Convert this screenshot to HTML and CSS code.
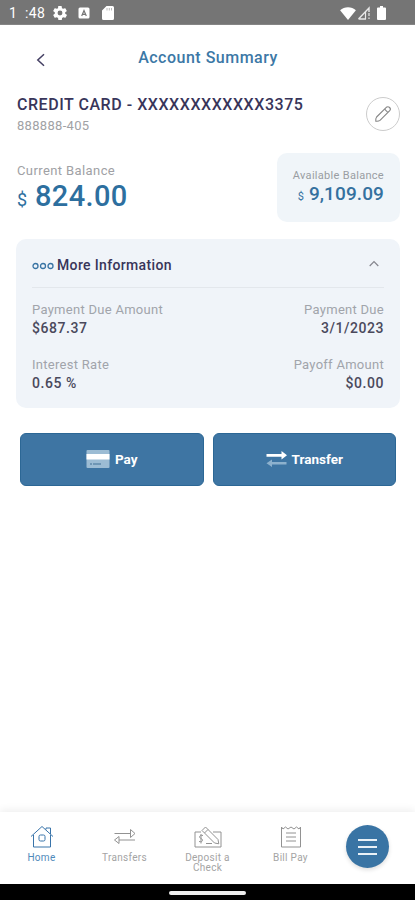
FILE: index.html
```html
<!DOCTYPE html>
<html lang="en">
<head>
<meta charset="utf-8">
<meta name="viewport" content="width=device-width, initial-scale=1">
<title>Account Summary</title>
<link rel="stylesheet" href="styles.css">
</head>
<body>
<div class="statusbar">
  <span class="hour">1</span><span class="minute">:48</span>
  <svg class="gear" width="14" height="14" viewBox="2 2 20 20"><path fill="#fff" d="M19.4 13a7.500 7.500 0 0 0 0-2l2.100-1.600a.5.5 0 0 0 .1-.6l-2-3.500a.5.5 0 0 0-.6-.2l-2.500 1a7.300 7.300 0 0 0-1.700-1l-.4-2.600a.5.5 0 0 0-.5-.4h-4a.5.5 0 0 0-.5.4L9.200 5.100a7.700 7.700 0 0 0-1.700 1L5 5.100a.5.5 0 0 0-.6.2l-2 3.500a.5.5 0 0 0 .1.600L4.600 11a8 8 0 0 0 0 2l-2.100 1.600a.5.5 0 0 0-.1.600l2 3.500c.1.200.4.300.6.200l2.500-1a7.300 7.300 0 0 0 1.700 1l.4 2.600c0 .2.200.4.5.4h4c.2 0 .5-.2.500-.4l.4-2.600a7.700 7.700 0 0 0 1.700-1l2.500 1c.2.100.5 0 .6-.2l2-3.500a.5.5 0 0 0-.1-.6zM12 15.500a3.500 3.500 0 1 1 0-7 3.500 3.500 0 0 1 0 7z"/></svg>
  <svg class="app" width="12" height="12" viewBox="0 0 12 12"><rect x=".5" y=".5" width="11" height="11" rx="1.500" fill="#fff"/><path d="M3.700 9 6 3.500 8.300 9M4.600 7.300h2.900" fill="none" stroke="#757575" stroke-width="1.200"/></svg>
  <svg class="sd" width="12" height="14" viewBox="0 0 12 14"><path fill="#fff" d="M4.500 0h6A1.500 1.500 0 0 1 12 1.500v11a1.500 1.500 0 0 1-1.500 1.500h-9A1.500 1.500 0 0 1 0 12.500v-8z"/><path d="M5 2v2.500M7.300 2v2.500M9.500 2v2.500" stroke="#bbb" stroke-width="1"/></svg>
  <svg class="wifi" width="16" height="13" viewBox="0 0 17 14"><path fill="#fff" d="M0 3.500C4.500-.7 12.500-.7 17 3.500L8.500 14z"/></svg>
  <svg class="signal" width="14" height="14" viewBox="0 0 14 14"><path d="M1.500 13 12 2v4M1.500 13H9" fill="none" stroke="#e8e8e8" stroke-width="1.400"/><path d="M8.500 6v7M12 7v3M12 11.500V13" stroke="#e8e8e8" stroke-width="1.200"/></svg>
  <svg class="battery" width="9" height="14" viewBox="0 0 9 14"><path fill="#fff" d="M3 0h3v1.500h2a1 1 0 0 1 1 1V13a1 1 0 0 1-1 1H1a1 1 0 0 1-1-1V2.500a1 1 0 0 1 1-1h2z"/></svg>
</div>
<header class="header">
  <svg class="back" width="10" height="14" viewBox="0 0 10 14"><path d="M8 1.200 1.800 7 8 12.800" fill="none" stroke="#443f63" stroke-width="1.500"/></svg>
  <h1 class="title">Account Summary</h1>
</header>
<main class="main">
  <section class="account">
    <div>
      <div class="name">CREDIT CARD - XXXXXXXXXXXX3375</div>
      <div class="number">888888-405</div>
    </div>
    <button class="edit" aria-label="Edit"><svg width="18" height="18" viewBox="0 0 18 18" fill="none" stroke="#868686" stroke-width="1.100"><path d="M2.600 12 12.300 2.300Q14 1 15.600 2.500T15.700 5.700L6 15.400Q4.500 16.500 1.800 16.200 1.500 13.500 2.600 12Z"/><path d="m10.600 4.200 3.200 3.200"/></svg></button>
  </section>
  <section class="balances">
    <div class="current">
      <div class="label">Current Balance</div>
      <div class="big"><span class="currency">$</span><span class="amount">824.00</span></div>
    </div>
    <div class="available">
      <div class="small-label">Available Balance</div>
      <div class="mid"><span class="currency">$</span><span class="amount">9,109.09</span></div>
    </div>
  </section>
  <section class="card">
    <div class="card-head">
      <svg width="22" height="8" viewBox="0 0 22 8" fill="none" stroke="#3974a4" stroke-width="1.300"><circle cx="3.500" cy="4" r="2.500"/><circle cx="11" cy="4" r="2.500"/><circle cx="18.500" cy="4" r="2.500"/></svg>
      <h2 class="more">More Information</h2>
      <svg class="chevron" width="10" height="7" viewBox="0 0 10 7"><path d="M.7 6 5 1.500 9.300 6" fill="none" stroke="#85858d" stroke-width="1.200"/></svg>
    </div>
    <dl class="facts">
      <div class="fact"><dt>Payment Due Amount</dt><dd>$687.37</dd></div>
      <div class="fact right"><dt>Payment Due</dt><dd>3/1/2023</dd></div>
      <div class="fact"><dt>Interest Rate</dt><dd>0.65 %</dd></div>
      <div class="fact right"><dt>Payoff Amount</dt><dd>$0.00</dd></div>
    </dl>
  </section>
  <section class="actions">
    <button class="action"><svg width="24" height="18" viewBox="0 0 24 18"><rect x=".5" width="23" height="18" rx="1" fill="#9cbcd4"/><path d="M.5 4h23v5.500H.5z" fill="#fff"/><path d="M4 14h2m1 0h8" stroke="#6e96b5" stroke-width="2"/></svg><span>Pay</span></button>
    <button class="action"><svg width="21" height="16" viewBox="0 0 21 16"><path d="M.5 3h15V0l5.500 4.300-5.500 4.200V5.800H.5z" fill="#fff"/><path d="M20.500 11H6V8.500L.5 12.300 6 16v-2.600h14.500z" fill="#8db1cd"/></svg><span>Transfer</span></button>
  </section>
</main>
<nav class="nav">
  <a class="tab active"><svg width="24" height="24" viewBox="0 0 24 24"><path d="M1 11.500 12 1.500l11 10M3.500 10v12h17V10M16 4.500V3h4.500v6"/><rect x="9" y="10" width="6" height="6" rx="1.500"/></svg><span>Home</span></a>
  <a class="tab"><svg width="24" height="24" viewBox="0 0 24 24"><path d="M1.500 8.500h16M17.500 4.500v8l4.500-4zM22 15H6M6 11.500v7L1.500 15z"/></svg><span>Transfers</span></a>
  <a class="tab"><svg width="28" height="24" viewBox="0 0 28 24"><path d="M7 7H1v15h26V7h-8M8 5.500 11.500 2 24 14.500l.8 4.300-4.300-.8zM10.500 8l3.500-3.500M9 10.500c-3.500-1-4.500 2-2 3s2 4-2 3M7 9v9.500M12 18.500h6"/></svg><span>Deposit a<br>Check</span></a>
  <a class="tab"><svg width="22" height="24" viewBox="0 0 22 24"><path d="M1.500 2 3 4l2.500-2L8 4l3-2 3 2 2.500-2L19 4l1.500-2v20H1.500zM6 8h10M6 12h10M6 16h10"/></svg><span>Bill Pay</span></a>
  <div class="tab"><button class="menu" aria-label="Menu"><i></i><i></i><i></i></button></div>
</nav>
<footer class="system"><span class="handle"></span></footer>
</body>
</html>
```
FILE: styles.css
```css
* { box-sizing: border-box; margin: 0; padding: 0; }
body { width: 415px; height: 900px; display: flex; flex-direction: column; background: #fff; font-family: Roboto, sans-serif; color: #38355a; overflow: hidden; }
button { border: 0; font: inherit; }
svg { display: block; flex: none; }
.statusbar { height: 25px; background: #757575; color: #fff; display: flex; align-items: center; padding: 2px 29px 0 9px; font-size: 14px; line-height: 23px; border-bottom: 1px solid #858585; }
.hour { width: 16px; }
.minute { width: 28px; letter-spacing: .4px; }
.app { margin-left: 11px; }
.sd { margin-left: 12px; }
.wifi { margin-left: auto; }
.signal { margin-left: 1px; }
.battery { margin-left: 6px; }
.header { height: 66px; display: grid; grid-template-columns: 1fr auto 1fr; align-items: center; }
.back { margin-left: 36px; margin-top: 3px; }
.title { font-size: 16px; font-weight: 500; color: #3c78a6; letter-spacing: .5px; line-height: 20px; margin: -1px 0 0 1px; }
.main { flex: 1; padding: 0 15px 0 16px; }
.account { display: flex; justify-content: space-between; height: 62px; padding: 4px 0 0 1px; }
.name { font-size: 16px; font-weight: 500; line-height: 20px; letter-spacing: .54px; white-space: nowrap; }
.number { font-size: 13px; line-height: 18px; margin-top: 2px; color: #a1a2a5; letter-spacing: .3px; }
.edit { width: 34px; height: 34px; margin-top: 2px; border: 1px solid #ccc; border-radius: 50%; background: #fff; display: grid; place-items: center; }
.balances { display: flex; justify-content: space-between; height: 86px; }
.current { padding: 10px 0 0 1px; }
.label { font-size: 13px; line-height: 16px; color: #a0a1a5; letter-spacing: .4px; }
.big { display: flex; align-items: baseline; color: #2d6f9f; line-height: 34px; }
.big .currency { font-size: 18px; width: 18px; }
.big .amount { font-size: 29px; font-weight: 500; letter-spacing: .35px; }
.available { width: 123px; height: 69px; border-radius: 10px; background: #f0f5f9; padding: 16px 16px 0 0; text-align: right; white-space: nowrap; }
.small-label { font-size: 11px; line-height: 13px; color: #999da2; letter-spacing: .3px; }
.mid { color: #34719f; line-height: 24px; }
.mid .currency { font-size: 11px; margin-right: 5px; }
.mid .amount { font-size: 19px; font-weight: 500; letter-spacing: .1px; }
.card { height: 169px; border-radius: 10px; background: #f0f4f9; padding: 0 16px; }
.card-head { height: 49px; border-bottom: 1px solid #e3e7ec; display: flex; align-items: center; padding-top: 5px; }
.more { font-size: 14px; font-weight: 500; margin-left: 3px; line-height: 18px; letter-spacing: .35px; margin-top: -1px; }
.chevron { margin-left: auto; margin-right: 5px; margin-top: -4px; }
.facts { display: grid; grid-template-columns: auto auto; justify-content: space-between; row-gap: 19px; padding-top: 13px; }
.fact { height: 36px; line-height: 18px; }
.fact dt { font-size: 13px; color: #a1a4ab; letter-spacing: .28px; }
.fact dd { font-size: 14px; font-weight: 500; color: #4a495c; line-height: 19px; letter-spacing: .55px; }
.right { text-align: right; }
.actions { display: flex; gap: 9px; padding: 25px 4px 0 4px; }
.action { flex: 1; height: 53px; background: #3e75a3; border: 1px solid #2c6795; border-radius: 6px; color: #fff; display: flex; align-items: center; justify-content: center; gap: 5px; font-size: 13.5px; font-weight: 700; padding-bottom: 1px; }
.nav { height: 72px; display: grid; grid-template-columns: repeat(4, 83px) 71px; background: #fff; box-shadow: 0 -2px 8px #00000012; }
.tab { display: flex; flex-direction: column; align-items: center; padding-top: 13px; font-size: 10px; line-height: 10px; letter-spacing: .3px; text-align: center; color: #a4a4a4; }
.tab svg { fill: none; stroke: #929292; stroke-width: 1; margin-bottom: 4px; }
.active { color: #4f8abb; }
.active svg { stroke: #3974aa; }
.menu { width: 43px; height: 43px; border-radius: 50%; background: #3974a4; box-shadow: 0 2px 4px #0002; display: flex; flex-direction: column; align-items: center; justify-content: center; gap: 5px; }
.menu i { width: 19px; height: 2px; background: #e9f1f7; }
.system { height: 16px; background: #000; display: flex; justify-content: center; padding-top: 7px; }
.handle { width: 77px; height: 4px; background: #eee; border-radius: 2px; }
```
